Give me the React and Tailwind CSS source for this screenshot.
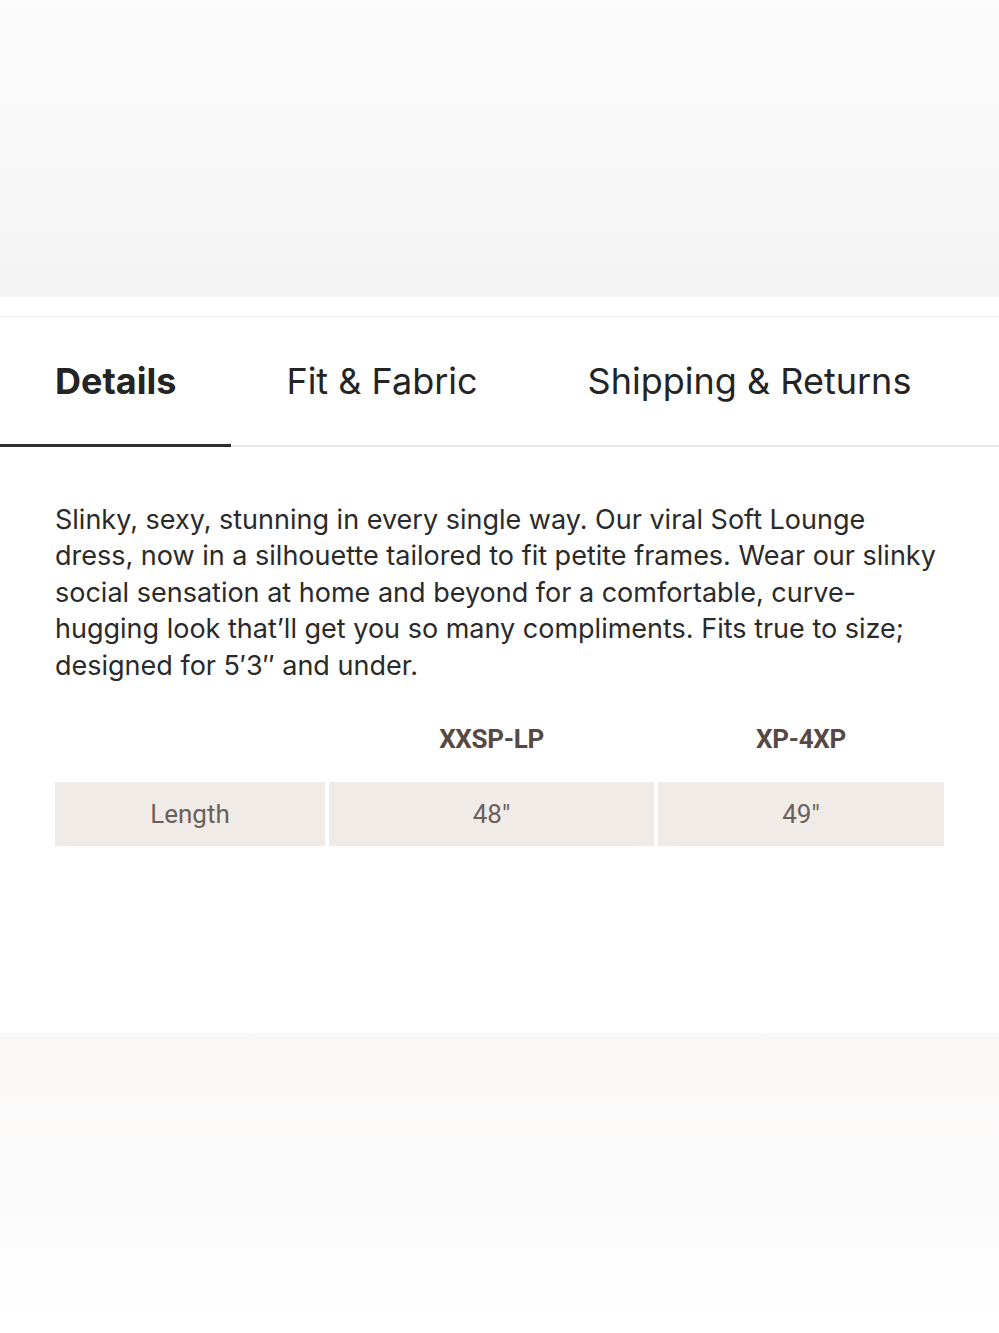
import React, { useState } from 'react';

const tabs = ['Details', 'Fit & Fabric', 'Shipping & Returns'];

const sizes = [
  { label: 'XXSP-LP', length: '48"' },
  { label: 'XP-4XP', length: '49"' },
];

export default function App() {
  const [active, setActive] = useState(0);

  return (
    <div className="w-[999px] h-[1333px] bg-white overflow-hidden flex flex-col" style={{ fontFamily: 'Inter, "Noto Sans", sans-serif' }}>
      {/* image placeholder */}
      <div className="h-[297px] shrink-0 bg-gradient-to-b from-[#fdfcfc] via-[#f9f8f8] to-[#f5f4f4]" />
      <div className="h-[19px] shrink-0" />
      <div className="h-px shrink-0 bg-[#f4f0f0]" />

      {/* tabs */}
      <div className="flex border-b-2 border-[#e9e8e8] mt-[28px]">
        {tabs.map((t, i) => (
          <button
            key={t}
            onClick={() => setActive(i)}
            className={`px-[55px] pt-[16px] pb-[43px] text-[36px] leading-[40px] text-[#242424] -mb-[2px] border-b-[3px] ${
              active === i ? 'font-bold border-[#2e2e2e]' : 'font-normal border-transparent'
            }`}
          >
            {t}
          </button>
        ))}
      </div>

      {/* details */}
      <div className="px-[55px] pt-[55px]">
        <p className="w-[890px] text-[27px] leading-[36.4px] text-[#2a2a2a]">
          Slinky, sexy, stunning in every single way. Our viral Soft Lounge dress, now in a silhouette tailored to fit petite frames. Wear our slinky social sensation at home and beyond for a comfortable, curve-hugging look that’ll get you so many compliments. Fits true to size; designed for 5′3″ and under.
        </p>

        <div className="w-[889px] mt-[20px]" style={{ fontFamily: 'Roboto, "Liberation Sans", sans-serif' }}>
          <div className="grid grid-cols-[270px_325px_286px] gap-x-[4px]">
            <div />
            {sizes.map((s) => (
              <div key={s.label} className="h-[70px] flex items-center justify-center text-[26px] font-bold tracking-[-0.3px] text-[#564943]">
                {s.label}
              </div>
            ))}
          </div>
          <div className="grid grid-cols-[270px_325px_286px] gap-x-[4px] mt-[8px]">
            <div className="h-[64px] bg-[#f1ebe7] flex items-center justify-center text-[26px] text-[#6a605b]">Length</div>
            {sizes.map((s) => (
              <div key={s.label} className="h-[64px] bg-[#f1ebe7] flex items-center justify-center text-[26px] text-[#6a605b]">
                {s.length}
              </div>
            ))}
          </div>
        </div>
      </div>

      <div className="flex-1" />
      <div className="h-[300px] shrink-0 bg-gradient-to-b from-[#f9f8f7] via-[#fcfbfb] to-white" />
    </div>
  );
}
